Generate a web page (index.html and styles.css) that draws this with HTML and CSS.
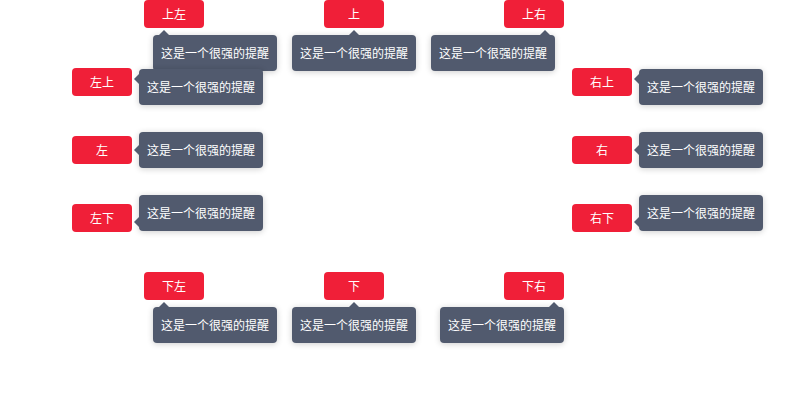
FILE: index.html
```
<!DOCTYPE html>
<html lang="zh-CN">
<head>
  <meta charset="UTF-8" />
  <meta name="viewport" content="width=device-width, initial-scale=1.0" />
  <title>Tooltip 位置</title>
  <link rel="stylesheet" href="styles.css">
</head>
<body>
  <div class="demo">
    <div class="row">
      <div class="tip-wrap">
        <button class="btn">上左</button>
        <div class="tip tip-bl arrow-up arrow-start">这是一个很强的提醒</div>
      </div>
      <div class="tip-wrap">
        <button class="btn">上</button>
        <div class="tip tip-b arrow-up arrow-center">这是一个很强的提醒</div>
      </div>
      <div class="tip-wrap">
        <button class="btn">上右</button>
        <div class="tip tip-br arrow-up arrow-end">这是一个很强的提醒</div>
      </div>
    </div>

    <div class="middle">
      <div class="col">
        <div class="tip-wrap">
          <button class="btn">左上</button>
          <div class="tip tip-rt arrow-left arrow-top">这是一个很强的提醒</div>
        </div>
        <div class="tip-wrap">
          <button class="btn">左</button>
          <div class="tip tip-r arrow-left arrow-mid">这是一个很强的提醒</div>
        </div>
        <div class="tip-wrap">
          <button class="btn">左下</button>
          <div class="tip tip-rb arrow-left arrow-bottom">这是一个很强的提醒</div>
        </div>
      </div>
      <div class="col">
        <div class="tip-wrap">
          <button class="btn">右上</button>
          <div class="tip tip-rt arrow-left arrow-top">这是一个很强的提醒</div>
        </div>
        <div class="tip-wrap">
          <button class="btn">右</button>
          <div class="tip tip-r arrow-left arrow-mid">这是一个很强的提醒</div>
        </div>
        <div class="tip-wrap">
          <button class="btn">右下</button>
          <div class="tip tip-rb arrow-left arrow-bottom">这是一个很强的提醒</div>
        </div>
      </div>
    </div>

    <div class="row bottom">
      <div class="tip-wrap">
        <button class="btn">下左</button>
        <div class="tip tip-bl arrow-up arrow-start">这是一个很强的提醒</div>
      </div>
      <div class="tip-wrap">
        <button class="btn">下</button>
        <div class="tip tip-b arrow-up arrow-center">这是一个很强的提醒</div>
      </div>
      <div class="tip-wrap">
        <button class="btn">下右</button>
        <div class="tip tip-br-flush arrow-up arrow-end">这是一个很强的提醒</div>
      </div>
    </div>
  </div>
</body>
</html>
```

FILE: styles.css
```
body {
  margin: 0;
  background: #fff;
  font-family: "Noto Sans CJK SC", "Noto Sans", sans-serif;
}
.demo {
  width: 800px;
  height: 400px;
}
.row {
  display: flex;
  gap: 120px;
  padding-left: 144px;
}
.row.bottom {
  margin-top: 40px;
}
.middle {
  display: flex;
  gap: 440px;
  padding-left: 72px;
  margin-top: 40px;
}
.col {
  display: flex;
  flex-direction: column;
  gap: 40px;
}
.tip-wrap {
  position: relative;
  width: 60px;
  height: 28px;
}
.btn {
  display: block;
  width: 60px;
  height: 28px;
  padding: 0;
  border: none;
  border-radius: 4px;
  background: #f01f38;
  color: #fff;
  font-family: inherit;
  font-size: 12px;
  line-height: 28px;
  cursor: pointer;
}

/* tooltip body */
.tip {
  position: absolute;
  z-index: 2;
  width: 124px;
  box-sizing: border-box;
  padding: 8px 8px;
  border-radius: 4px;
  background: #515a6e;
  color: #fff;
  font-size: 12px;
  line-height: 19.5px;
  text-align: center;
  white-space: nowrap;
  box-shadow: 0 1px 6px rgba(0, 0, 0, 0.2);
}
.tip-bl { left: 9px; top: 35px; }
.tip-b { left: -32px; top: 35px; }
.tip-br { right: 9px; top: 35px; }
.tip-br-flush { right: 0; top: 35px; }
.tip-rt { left: 67px; top: 1px; }
.tip-r { left: 67px; top: -4px; }
.tip-rb { left: 67px; top: -9px; }

/* arrows */
.tip::before {
  content: "";
  position: absolute;
  width: 0;
  height: 0;
  border: 5px solid transparent;
}
.arrow-up::before {
  top: -10px;
  border-bottom-color: #515a6e;
}
.arrow-start::before { left: 6px; }
.arrow-center::before { left: 57px; }
.arrow-end::before { right: 5px; }
.arrow-left::before {
  left: -10px;
  border-right-color: #515a6e;
}
.arrow-top::before { top: 5px; }
.arrow-mid::before { top: 13px; }
.arrow-bottom::before { bottom: 4px; }
```
